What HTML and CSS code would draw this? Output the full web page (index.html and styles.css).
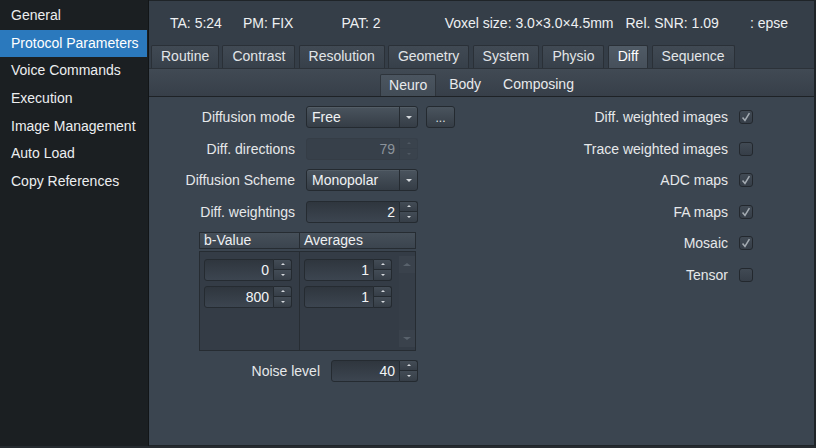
FILE: index.html
```html
<!DOCTYPE html>
<html>
<head>
<meta charset="utf-8">
<link rel="stylesheet" href="styles.css">
</head>
<body>
<div class="app">
  <nav class="sidebar">
    <div class="nav-item">General</div>
    <div class="nav-item active">Protocol Parameters</div>
    <div class="nav-item">Voice Commands</div>
    <div class="nav-item">Execution</div>
    <div class="nav-item">Image Management</div>
    <div class="nav-item">Auto Load</div>
    <div class="nav-item">Copy References</div>
  </nav>
  <main class="main">
    <header class="info">
      <span class="info-ta">TA: 5:24</span>
      <span class="info-pm">PM: FIX</span>
      <span class="info-pat">PAT: 2</span>
      <span class="info-voxel">Voxel size: 3.0×3.0×4.5mm</span>
      <span class="info-snr">Rel. SNR: 1.09</span>
      <span class="info-epse">: epse</span>
    </header>
    <div class="tabs">
      <div class="tab">Routine</div>
      <div class="tab">Contrast</div>
      <div class="tab">Resolution</div>
      <div class="tab">Geometry</div>
      <div class="tab">System</div>
      <div class="tab">Physio</div>
      <div class="tab tab-active">Diff</div>
      <div class="tab">Sequence</div>
    </div>
    <div class="subbar">
      <div class="subtab subtab-active">Neuro</div>
      <div class="subtab">Body</div>
      <div class="subtab">Composing</div>
    </div>
    <section class="content">
      <div class="left">
        <div class="form">
          <div class="label">Diffusion mode</div>
          <div class="ctrl-row">
            <div class="select"><span class="select-val">Free</span><span class="select-btn"><i class="arr-down"></i></span></div>
            <div class="btn-more">...</div>
          </div>

          <div class="label">Diff. directions</div>
          <div class="spin spin-disabled"><span class="spin-val">79</span><span class="spin-btns"><span class="sb"><i class="arr-up"></i></span><span class="sb"><i class="arr-down"></i></span></span></div>

          <div class="label">Diffusion Scheme</div>
          <div class="select"><span class="select-val">Monopolar</span><span class="select-btn"><i class="arr-down"></i></span></div>

          <div class="label">Diff. weightings</div>
          <div class="spin"><span class="spin-val">2</span><span class="spin-btns"><span class="sb"><i class="arr-up"></i></span><span class="sb"><i class="arr-down"></i></span></span></div>
        </div>

        <div class="table">
          <div class="thead">
            <div class="th th-b">b-Value</div>
            <div class="th th-a">Averages</div>
          </div>
          <div class="tbody">
            <div class="col col-b">
              <div class="spin spin-sm"><span class="spin-val">0</span><span class="spin-btns"><span class="sb"><i class="arr-up"></i></span><span class="sb"><i class="arr-down"></i></span></span></div>
              <div class="spin spin-sm"><span class="spin-val">800</span><span class="spin-btns"><span class="sb"><i class="arr-up"></i></span><span class="sb"><i class="arr-down"></i></span></span></div>
            </div>
            <div class="col col-a">
              <div class="spin spin-sm"><span class="spin-val">1</span><span class="spin-btns"><span class="sb"><i class="arr-up"></i></span><span class="sb"><i class="arr-down"></i></span></span></div>
              <div class="spin spin-sm"><span class="spin-val">1</span><span class="spin-btns"><span class="sb"><i class="arr-up"></i></span><span class="sb"><i class="arr-down"></i></span></span></div>
            </div>
            <div class="scrollbar">
              <span class="sc-btn"><i class="sc-up"></i></span>
              <span class="sc-track"></span>
              <span class="sc-btn"><i class="sc-down"></i></span>
            </div>
          </div>
        </div>

        <div class="noise">
          <div class="label">Noise level</div>
          <div class="spin spin-noise"><span class="spin-val">40</span><span class="spin-btns"><span class="sb"><i class="arr-up"></i></span><span class="sb"><i class="arr-down"></i></span></span></div>
        </div>
      </div>

      <div class="right">
        <div class="check-row"><span>Diff. weighted images</span><span class="cb"><svg viewBox="0 0 14 14"><polyline points="3,7.5 5.8,11 11,2.5"/></svg></span></div>
        <div class="check-row"><span>Trace weighted images</span><span class="cb"></span></div>
        <div class="check-row"><span>ADC maps</span><span class="cb"><svg viewBox="0 0 14 14"><polyline points="3,7.5 5.8,11 11,2.5"/></svg></span></div>
        <div class="check-row"><span>FA maps</span><span class="cb"><svg viewBox="0 0 14 14"><polyline points="3,7.5 5.8,11 11,2.5"/></svg></span></div>
        <div class="check-row"><span>Mosaic</span><span class="cb"><svg viewBox="0 0 14 14"><polyline points="3,7.5 5.8,11 11,2.5"/></svg></span></div>
        <div class="check-row"><span>Tensor</span><span class="cb"></span></div>
      </div>
    </section>
  </main>
</div>
</body>
</html>
```

FILE: styles.css
```css
* { box-sizing: border-box; }
html, body { margin: 0; padding: 0; }
body {
  width: 816px;
  height: 448px;
  overflow: hidden;
  background: #262b30;
  font-family: "Liberation Sans", Arial, sans-serif;
  font-size: 14px;
  color: #e4e7ea;
}
.app {
  display: flex;
  height: 446px;
}

/* sidebar */
.sidebar {
  width: 149px;
  background: #1b1f22;
  border-right: 1px solid #121517;
  padding-top: 2px;
}
.nav-item {
  height: 27.67px;
  line-height: 27.67px;
  padding-left: 11px;
  color: #eceef0;
  white-space: nowrap;
}
.nav-item.active {
  background: #2b79bd;
  color: #ffffff;
  margin-right: 1px;
}

/* main */
.main {
  flex: 1;
  display: flex;
  flex-direction: column;
  background: #3b4550;
  border-top: 1px solid #1f2428;
  border-right: 2px solid #1f2428;
  border-bottom: 1px solid #1f2428;
}
.info {
  height: 42px;
  display: flex;
  align-items: center;
  background: #353e48;
  white-space: nowrap;
  color: #eef0f2;
  padding-top: 2px;
}
.info-ta { margin-left: 21px; }
.info-pm { margin-left: 21px; }
.info-pat { margin-left: 48px; }
.info-voxel { margin-left: 64px; }
.info-snr { margin-left: 12px; }
.info-epse { margin-left: 31px; }

.tabs {
  height: 25px;
  display: flex;
  align-items: flex-start;
  gap: 3.2px;
  padding: 2px 0 0 2px;
  background: #353e48;
}
.tab {
  height: 23px;
  line-height: 21px;
  padding: 0 9px;
  background: linear-gradient(#414a54, #37404a);
  border: 1px solid #2a3037;
  border-bottom: none;
  border-radius: 2px 2px 0 0;
  color: #e2e5e8;
  white-space: nowrap;
}
.tab-active {
  background: linear-gradient(#505b66, #46505b);
  color: #ffffff;
}

.subbar {
  height: 29px;
  display: flex;
  justify-content: center;
  align-items: flex-end;
  gap: 4px;
  background: linear-gradient(#414a54, #373f49);
  border-top: 1px solid #2c3239;
  border-bottom: 1px solid #1e2226;
}
.subtab {
  height: 22px;
  line-height: 20px;
  padding: 0 9px;
  color: #e8eaec;
  white-space: nowrap;
}
.subtab-active {
  background: linear-gradient(#4b5560, #424c56);
  border: 1px solid #2e343b;
  border-bottom: none;
  border-radius: 2px 2px 0 0;
  padding: 0 8px;
}

/* content */
.content {
  flex: 1;
  display: flex;
  padding-top: 9px;
}
.left {
  width: 300px;
  display: flex;
  flex-direction: column;
}
.form {
  display: grid;
  grid-template-columns: 146px 112px;
  grid-auto-rows: 22px;
  column-gap: 11px;
  row-gap: 9.5px;
  align-items: center;
}
.label {
  text-align: right;
  white-space: nowrap;
  color: #e6e8ea;
}
.ctrl-row {
  display: flex;
  gap: 8px;
  height: 22px;
  width: 150px;
}

/* select */
.select {
  width: 112px;
  height: 22px;
  flex: none;
  display: flex;
  background: linear-gradient(#4a545e, #353d46);
  border: 1px solid #242a30;
  border-radius: 3px;
  box-shadow: inset 0 1px 0 rgba(255,255,255,0.06);
}
.select-val {
  flex: 1;
  line-height: 20px;
  padding-left: 5px;
  color: #f0f2f4;
}
.select-btn {
  width: 18px;
  border-left: 1px solid #252b31;
  display: flex;
  align-items: center;
  justify-content: center;
}
.btn-more {
  flex: none;
  width: 29px;
  height: 22px;
  background: linear-gradient(#4a545e, #353d46);
  border: 1px solid #242a30;
  border-radius: 3px;
  text-align: center;
  line-height: 22px;
  font-size: 12px;
  color: #dfe2e5;
}

/* arrows */
.arr-down, .arr-up {
  display: block;
  width: 0;
  height: 0;
  border-left: 3px solid transparent;
  border-right: 3px solid transparent;
}
.arr-down { border-top: 3px solid #d5d9dd; }
.arr-up { border-bottom: 3px solid #d5d9dd; }

/* spin */
.spin {
  width: 112px;
  height: 22px;
  display: flex;
}
.spin-val {
  flex: 1;
  text-align: right;
  padding-right: 4px;
  line-height: 21px;
  background: linear-gradient(#2f363e, #3c4550);
  border: 1px solid #252b31;
  border-radius: 3px 0 0 3px;
  color: #f2f4f6;
}
.spin-btns {
  width: 18px;
  display: flex;
  flex-direction: column;
}
.sb {
  flex: 1;
  display: flex;
  align-items: center;
  justify-content: center;
  background: linear-gradient(#434c56, #363e47);
  border: 1px solid #242a30;
  border-left: none;
}
.sb:first-child { border-radius: 0 3px 0 0; border-bottom: none; }
.sb:last-child { border-radius: 0 0 3px 0; }
.sb .arr-up { border-left-width: 2.5px; border-right-width: 2.5px; border-bottom-width: 2px; }
.sb .arr-down { border-left-width: 2.5px; border-right-width: 2.5px; border-top-width: 2px; }

.spin-disabled .spin-val {
  background: #37404a;
  border-color: #353d46;
  color: #8b939b;
}
.spin-disabled .sb {
  background: #3a434d;
  border-color: #37404a;
}
.spin-disabled .arr-up { border-bottom-color: #4f5862; }
.spin-disabled .arr-down { border-top-color: #4f5862; }

.spin-sm { width: 88px; }
.spin-noise { width: 87px; }

/* table */
.table {
  margin: 9px 0 0 50px;
  width: 217px;
}
.thead {
  display: flex;
  height: 17px;
}
.th {
  background: linear-gradient(#46505a, #3b444e);
  border: 1px solid #262c32;
  line-height: 15px;
  padding-left: 4px;
  color: #eef0f2;
}
.th-b { width: 101px; }
.th-a { flex: 1; border-left: none; }
.tbody {
  margin-top: 2px;
  height: 100px;
  display: flex;
  background: #343c46;
  border: 1px solid #262c32;
}
.col {
  display: flex;
  flex-direction: column;
  gap: 5px;
  padding: 7px 0 0 4px;
}
.col-b { width: 100px; border-right: 1px solid #272d33; }
.col-a { width: 99px; }
.scrollbar {
  flex: 1;
  display: flex;
  flex-direction: column;
  padding: 4px 0 3px;
}
.sc-btn {
  height: 17px;
  display: flex;
  align-items: center;
  justify-content: center;
  background: #3a424c;
}
.sc-track { flex: 1; background: #363e48; }
.sc-up, .sc-down {
  display: block;
  width: 0;
  height: 0;
  border-left: 4px solid transparent;
  border-right: 4px solid transparent;
}
.sc-up { border-bottom: 3px solid #59626c; }
.sc-down { border-top: 3px solid #59626c; }

/* noise */
.noise {
  display: grid;
  grid-template-columns: 171px 87px;
  column-gap: 11px;
  align-items: center;
  margin-top: 9px;
}

/* right */
.right {
  flex: 1;
  display: flex;
  flex-direction: column;
  align-items: flex-end;
  gap: 9.5px;
  padding-right: 61px;
}
.check-row {
  height: 22px;
  display: flex;
  align-items: center;
  gap: 11px;
  white-space: nowrap;
  color: #e6e8ea;
}
.cb {
  width: 14px;
  height: 14px;
  background: linear-gradient(#414a54, #363e48);
  border: 1px solid #23282e;
  border-radius: 3px;
  display: block;
}
.cb svg {
  display: block;
  width: 12px;
  height: 12px;
}
.cb polyline {
  fill: none;
  stroke: #a3aab1;
  stroke-width: 1.8;
}
```
